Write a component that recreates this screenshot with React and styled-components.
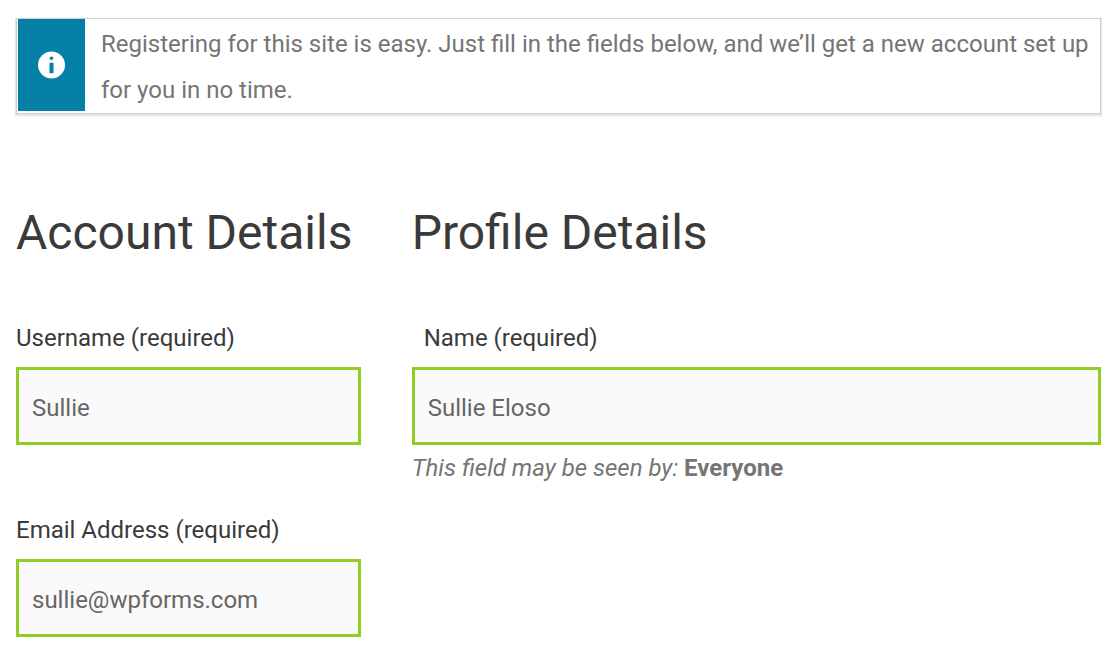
import React from 'react';
import styled, { createGlobalStyle } from 'styled-components';

const App = () => (
  <Page>
    <GlobalStyle />
    <Notice role="status">
      <NoticeIcon>
        <svg width="28" height="28" viewBox="0 0 28 28" aria-hidden="true">
          <circle cx="13.5" cy="14" r="13.5" fill="#fff" />
          <circle cx="13.5" cy="7.2" r="1.8" fill="#0480a7" />
          <path d="M11.5 11.8h4v10.4h-4z" fill="#0480a7" />
        </svg>
      </NoticeIcon>
      <NoticeText>
        Registering for this site is easy. Just fill in the fields below, and we’ll get a new account set up for you in no time.
      </NoticeText>
    </Notice>
    <Form>
      <Section>
        <Title>Account Details</Title>
        <Field>
          <Label htmlFor="username">Username (required)</Label>
          <Input id="username" type="text" defaultValue="Sullie" />
        </Field>
        <Field>
          <Label htmlFor="email">Email Address (required)</Label>
          <Input id="email" type="email" defaultValue="sullie@wpforms.com" />
        </Field>
      </Section>
      <Section>
        <Title>Profile Details</Title>
        <Field>
          <Label htmlFor="name" $indent>Name (required)</Label>
          <Input id="name" type="text" defaultValue="Sullie Eloso" />
          <Visibility>
            <em>This field may be seen by:</em> <strong>Everyone</strong>
          </Visibility>
        </Field>
      </Section>
    </Form>
  </Page>
);

export default App;

const GlobalStyle = createGlobalStyle`
  * {
    box-sizing: border-box;
  }

  body {
    margin: 0;
    background: #fff;
    color: #3a3a3a;
    font-family: Roboto, "Liberation Sans", sans-serif;
  }
`;

const Page = styled.main`
  padding: 18px 15px 14px 16px;
`;

const Notice = styled.div`
  display: flex;
  padding-left: 1px;
  border: 1px solid #cfcfcf;
  box-shadow: 0 1px 1px 1px #e6e6e6;
`;

const NoticeIcon = styled.div`
  display: flex;
  flex: none;
  align-items: center;
  justify-content: center;
  width: 67px;
  margin-bottom: 2px;
  background: #0480a7;
`;

const NoticeText = styled.p`
  flex: 1;
  margin: 0;
  padding: 2px 0 0 16px;
  color: #757575;
  font-size: 24px;
  line-height: 46px;
`;

const Form = styled.form`
  display: grid;
  grid-template-columns: 1fr 2fr;
  column-gap: 51px;
  margin-top: 87px;
`;

const Section = styled.section`
  min-width: 0;
`;

const Title = styled.h2`
  margin: 0 0 50px;
  font-size: 48px;
  font-weight: 400;
  line-height: 64px;
  white-space: nowrap;
`;

const Field = styled.div`
  & + & {
    margin-top: 62px;
  }
`;

const Label = styled.label`
  display: block;
  margin-bottom: 6px;
  padding-left: ${(props) => (props.$indent ? '12px' : '0')};
  font-size: 24px;
  line-height: 46px;
`;

const Input = styled.input`
  display: block;
  width: 100%;
  height: 78px;
  padding: 4px 13px 0;
  border: 3px solid #8fce26;
  border-radius: 0;
  background: #fafafa;
  color: #666;
  font-family: inherit;
  font-size: 24px;
`;

const Visibility = styled.p`
  margin: 0;
  color: #757575;
  font-size: 24px;
  line-height: 46px;
`;
